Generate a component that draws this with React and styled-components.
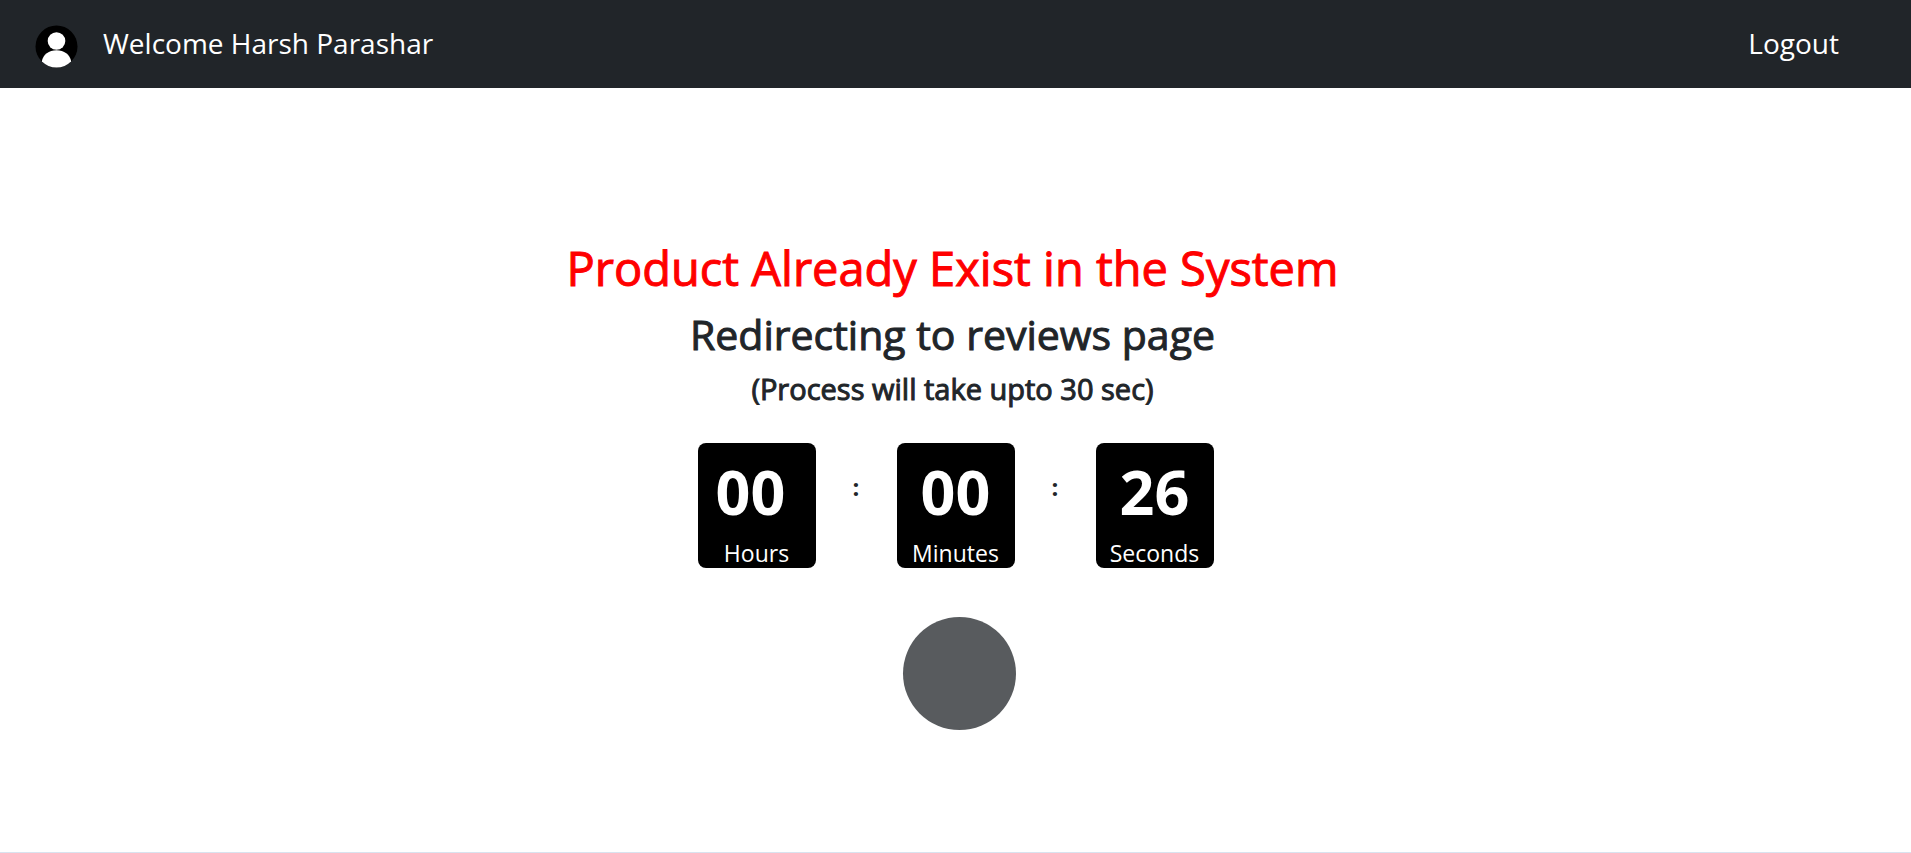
import React from "react";
import styled, { createGlobalStyle } from "styled-components";

const GlobalStyle = createGlobalStyle`
  *, *::before, *::after { box-sizing: border-box; }
  body {
    margin: 0;
    background: #fff;
    color: #212529;
    font-family: "Open Sans", "Noto Sans", sans-serif;
  }
`;

const Page = styled.div`
  display: flex;
  flex-direction: column;
  min-height: 100vh;
  border-bottom: 1px solid #d9e3ef;
`;

const TopBar = styled.header`
  display: flex;
  align-items: center;
  justify-content: space-between;
  height: 88px;
  padding: 0 72px 2px 35px;
  background: #212529;
  color: #fff;
  font-size: 28px;
  line-height: 40px;
`;

const User = styled.div`
  display: flex;
  align-items: center;
  gap: 25px;
`;

const Avatar = styled.svg`
  width: 43px;
  height: 43px;
  margin-top: 7px;
`;

const LogoutLink = styled.a`
  color: inherit;
  text-decoration: none;
`;

const Content = styled.main`
  display: flex;
  flex-direction: column;
  align-items: center;
  padding-top: 150px;
`;

const Messages = styled.div`
  padding-right: 6px;
  text-align: center;
  -webkit-text-stroke: 1px currentColor;
`;

const Title = styled.h1`
  margin: 0 0 8px;
  color: #f00;
  font-size: 47px;
  font-weight: 500;
  line-height: 60px;
`;

const Subtitle = styled.h2`
  margin: 0 0 8px;
  font-size: 41px;
  font-weight: 500;
  line-height: 56px;
`;

const Note = styled.h3`
  margin: 0;
  font-size: 29px;
  font-weight: 500;
  line-height: 38px;
`;

const Timer = styled.div`
  display: flex;
  align-items: flex-start;
  margin-top: 35px;
`;

const Card = styled.div`
  display: flex;
  flex-direction: column;
  align-items: center;
  width: 118px;
  height: 125px;
  padding-top: 14px;
  border-radius: 8px;
  background: #000;
  color: #fff;
`;

const Digits = styled.span`
  padding-right: ${(p) => (p.$inset ? 12 : 0)}px;
  font-size: 61px;
  font-weight: 700;
  line-height: 70px;
`;

const Unit = styled.span`
  margin-top: 10px;
  font-size: 23px;
  line-height: 32px;
`;

const Colon = styled.span`
  width: 81px;
  padding-top: 28px;
  font-size: 24px;
  font-weight: 700;
  line-height: 32px;
  text-align: center;
`;

const Loader = styled.div`
  width: 113px;
  height: 113px;
  margin: 49px 0 0 8px;
  border-radius: 50%;
  background: #585b5e;
`;

const units = [
  { label: "Hours", value: "00", inset: true },
  { label: "Minutes", value: "00" },
  { label: "Seconds", value: "26" },
];

export default function App() {
  return (
    <Page>
      <GlobalStyle />
      <TopBar>
        <User>
          <Avatar viewBox="0 0 43 43" aria-hidden="true">
            <clipPath id="avatar-clip">
              <circle cx="21.5" cy="21.5" r="21" />
            </clipPath>
            <circle cx="21.5" cy="21.5" r="21" fill="#000" />
            <circle cx="21.5" cy="16" r="8.8" fill="#fff" />
            <path
              d="M6.8 36.5C8 29.5 14 25.3 21.5 25.3S35 29.5 36.2 36.5V43H6.8Z"
              fill="#fff"
              clipPath="url(#avatar-clip)"
            />
          </Avatar>
          <span>Welcome Harsh Parashar</span>
        </User>
        <LogoutLink href="#logout">Logout</LogoutLink>
      </TopBar>
      <Content>
        <Messages>
          <Title>Product Already Exist in the System</Title>
          <Subtitle>Redirecting to reviews page</Subtitle>
          <Note>(Process will take upto 30 sec)</Note>
        </Messages>
        <Timer role="timer">
          {units.map((unit, i) => (
            <React.Fragment key={unit.label}>
              {i > 0 && <Colon>:</Colon>}
              <Card>
                <Digits $inset={unit.inset}>{unit.value}</Digits>
                <Unit>{unit.label}</Unit>
              </Card>
            </React.Fragment>
          ))}
        </Timer>
        <Loader role="status" aria-label="Loading" />
      </Content>
    </Page>
  );
}
